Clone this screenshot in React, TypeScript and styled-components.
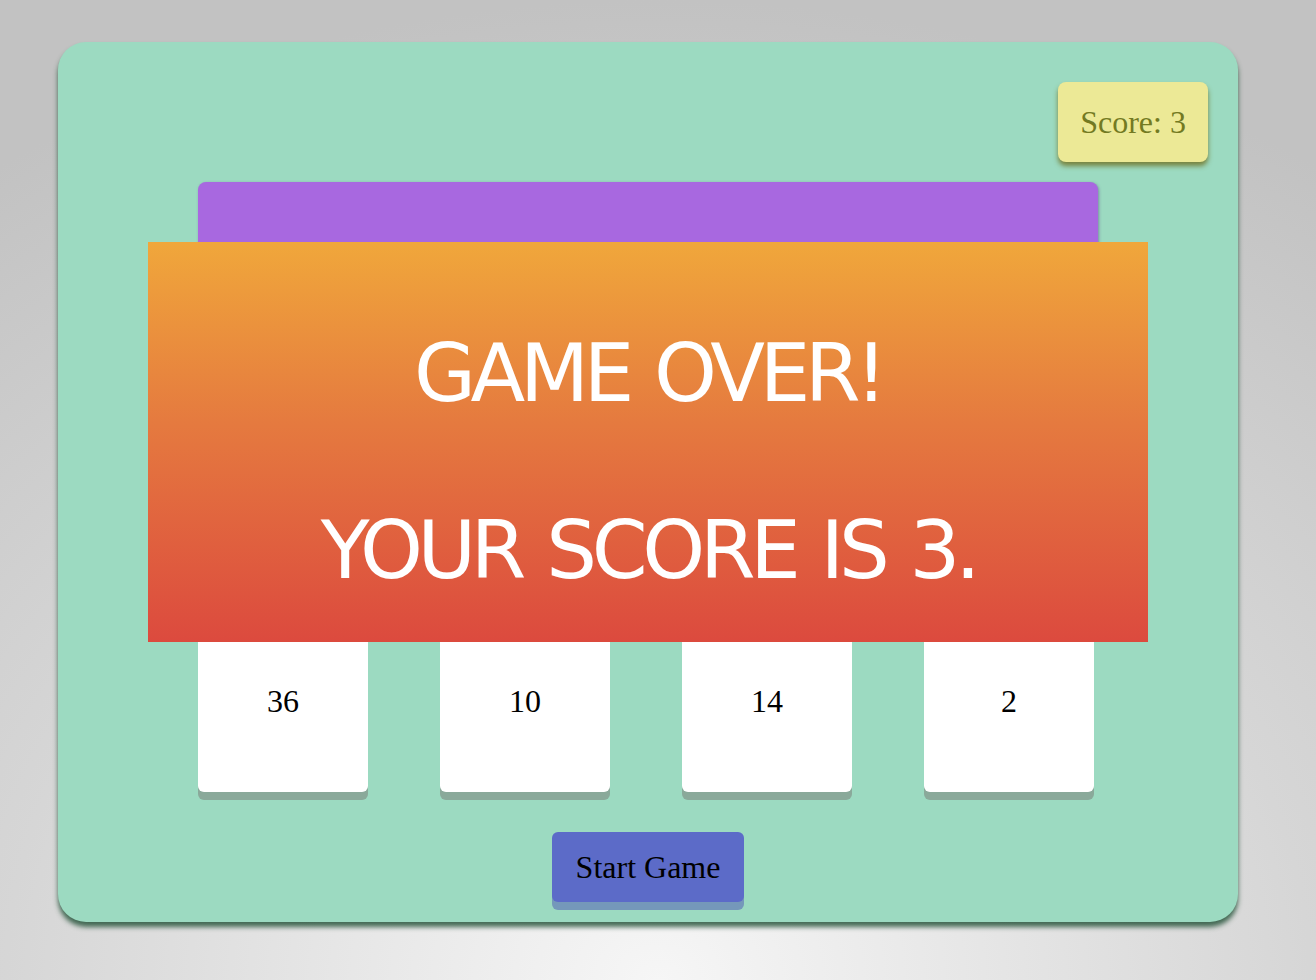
import React from "react";
import styled, { createGlobalStyle } from "styled-components";

const Global = createGlobalStyle`
  html, body { margin: 0; padding: 0; }
  body {
    min-height: 980px;
    background: radial-gradient(ellipse 90% 100% at 50% 100%, #f6f6f6 0%, #d6d6d6 55%, #c2c2c2 100%);
    font-family: "Liberation Serif", "Times New Roman", serif;
  }
`;

const Page = styled.div`
  padding: 42px 0 0 58px;
  height: 938px;
  box-sizing: border-box;
`;

const GameBox = styled.div`
  position: relative;
  width: 1180px;
  height: 880px;
  box-sizing: border-box;
  padding: 40px 30px 0;
  background: #9cdac1;
  border-radius: 28px;
  box-shadow: 0 5px 5px rgba(40, 85, 60, 0.85);
`;

const ScoreRow = styled.div`
  display: flex;
  justify-content: flex-end;
`;

const ScoreBadge = styled.div`
  width: 150px;
  height: 80px;
  display: flex;
  align-items: center;
  justify-content: center;
  background: #ece996;
  color: #737a22;
  font-size: 32px;
  border-radius: 8px;
  box-shadow: 0 4px 5px rgba(110, 110, 30, 0.8);
`;

const Board = styled.div`
  width: 900px;
  margin: 20px auto 0;
  display: flex;
  flex-direction: column;
  align-items: center;
`;

const QuestionBar = styled.div`
  width: 900px;
  height: 160px;
  background: #a868e0;
  border-radius: 8px;
  box-shadow: 1px 1px 3px rgba(90, 60, 140, 0.5);
`;

const CardRow = styled.div`
  width: 900px;
  margin-top: 300px;
  display: flex;
  gap: 72px;
`;

const Card = styled.div`
  width: 170px;
  height: 150px;
  box-sizing: border-box;
  padding-top: 41px;
  background: #ffffff;
  border-radius: 0 0 6px 6px;
  text-align: center;
  font-size: 32px;
  color: #000;
  box-shadow: 0 8px 0 #8aa99a;
`;

const StartButton = styled.button`
  margin-top: 40px;
  width: 192px;
  height: 70px;
  border: none;
  border-radius: 6px;
  background: #5c6bc8;
  color: #000;
  font-family: "Liberation Serif", "Times New Roman", serif;
  font-size: 32px;
  box-shadow: 0 8px 0 #7598ba;
  cursor: pointer;
  padding: 0;
`;

const Overlay = styled.div`
  position: absolute;
  top: 200px;
  left: 90px;
  width: 1000px;
  height: 400px;
  box-sizing: border-box;
  padding-top: 88px;
  background: linear-gradient(to bottom, #f0a73b 0%, #e57a3f 45%, #dc4a3e 100%);
  color: #ffffff;
  text-align: center;
  font-family: "DejaVu Sans", Verdana, sans-serif;
  font-size: 80px;
  line-height: 88.5px;
  letter-spacing: -5.3px;
  word-spacing: 5px;
`;

const OverlayLine = styled.div<{ $gap?: boolean }>`
  margin-top: ${(p) => (p.$gap ? "88.5px" : "0")};
`;

const cards = [36, 10, 14, 2];

export default function App() {
  return (
    <>
      <Global />
      <Page>
        <GameBox>
          <ScoreRow>
            <ScoreBadge>Score: 3</ScoreBadge>
          </ScoreRow>
          <Board>
            <QuestionBar />
            <CardRow>
              {cards.map((n) => (
                <Card key={n}>{n}</Card>
              ))}
            </CardRow>
            <StartButton>Start Game</StartButton>
          </Board>
          <Overlay>
            <OverlayLine>GAME OVER!</OverlayLine>
            <OverlayLine $gap>YOUR SCORE IS 3.</OverlayLine>
          </Overlay>
        </GameBox>
      </Page>
    </>
  );
}
